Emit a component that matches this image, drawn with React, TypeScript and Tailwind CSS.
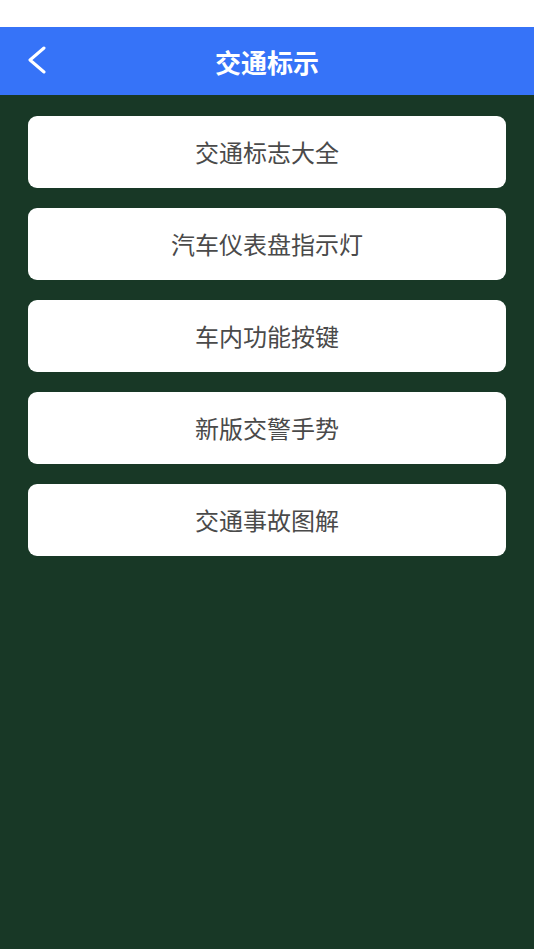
const items = ["交通标志大全", "汽车仪表盘指示灯", "车内功能按键", "新版交警手势", "交通事故图解"];

export default function App() {
  return (
    <div
      className="min-h-[949px] w-full bg-[#183826] flex flex-col"
      style={{ fontFamily: '"Noto Sans CJK SC", "Noto Sans", sans-serif' }}
    >
      <div className="h-[27px] bg-white" />
      <header className="relative h-[68px] bg-[#3673f8] flex items-center justify-center">
        <button className="absolute left-[27px] top-[19px]">
          <svg width="20" height="28" viewBox="0 0 20 28" fill="none">
            <polyline
              points="17,2 3,14 17,26"
              stroke="white"
              strokeWidth="3"
              strokeLinecap="round"
              strokeLinejoin="round"
            />
          </svg>
        </button>
        <h1 className="text-[26px] font-bold text-white">交通标示</h1>
      </header>
      <main className="flex flex-col gap-[20px] px-[28px] pt-[21px]">
        {items.map((item) => (
          <div
            key={item}
            className="h-[72px] rounded-[9px] bg-white flex items-center justify-center text-[24px] text-[#4a4a4a]"
          >
            {item}
          </div>
        ))}
      </main>
    </div>
  );
}
